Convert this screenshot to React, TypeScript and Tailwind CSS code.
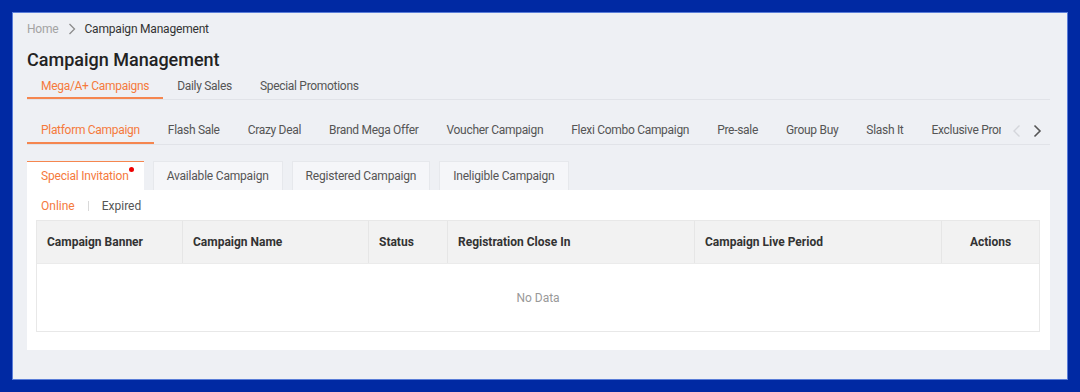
import React from "react";

const subTabs = [
  "Platform Campaign",
  "Flash Sale",
  "Crazy Deal",
  "Brand Mega Offer",
  "Voucher Campaign",
  "Flexi Combo Campaign",
  "Pre-sale",
  "Group Buy",
  "Slash It",
  "Exclusive Promotion",
];

const cardTabs = ["Special Invitation", "Available Campaign", "Registered Campaign", "Ineligible Campaign"];

export default function App() {
  return (
    <div
      className="w-[1080px] h-[392px] bg-[#0029a3] p-[12px]"
      style={{ fontFamily: "Roboto, 'Liberation Sans', sans-serif" }}
    >
      <div className="h-full border border-[#5a7dd8] bg-[#eef0f4] pl-[14px] pr-[17px] pt-[6px]">
        {/* breadcrumb */}
        <div className="flex items-center h-[20px] text-[12px] tracking-[-0.2px]">
          <span className="text-[#a3a3a3]">Home</span>
          <svg width="14" height="14" viewBox="0 0 14 14" className="mx-[6px]">
            <path d="M4.5 2 L9.5 7 L4.5 12" fill="none" stroke="#8c8c8c" strokeWidth="1.3" />
          </svg>
          <span className="text-[#333]">Campaign Management</span>
        </div>
        {/* title */}
        <div className="mt-[8px] h-[26px] leading-[26px] text-[18px] font-medium text-[#222]">Campaign Management</div>
        {/* top tabs */}
        <div className="flex border-b border-[#e1e3e8] h-[27px]">
          {["Mega/A+ Campaigns", "Daily Sales", "Special Promotions"].map((t, i) => (
            <div
              key={t}
              className={
                "px-[14px] h-[26px] pt-[2px] flex items-center text-[12px] tracking-[-0.3px] border-b-2 " +
                (i === 0 ? "text-[#f57a3c] border-[#f5864f]" : "text-[#555] border-transparent")
              }
            >
              {t}
            </div>
          ))}
        </div>
        {/* sub tabs */}
        <div className="mt-[15px] flex items-center border-b border-[#e1e3e8] h-[30px]">
          <div className="flex overflow-hidden w-[974px] h-[29px]">
            {subTabs.map((t, i) => (
              <div
                key={t}
                className={
                  "shrink-0 px-[14px] h-[29px] pt-[3px] flex items-center text-[12px] tracking-[-0.3px] border-b-2 whitespace-nowrap " +
                  (i === 0 ? "text-[#f57a3c] border-[#f5864f]" : "text-[#555] border-transparent")
                }
              >
                {t}
              </div>
            ))}
          </div>
          <div className="flex items-center h-[29px] pt-[2px] ml-[9px] gap-[6px]">
            <svg width="14" height="16" viewBox="0 0 14 16">
              <path d="M9.5 2.5 L4 8 L9.5 13.5" fill="none" stroke="#d4d6db" strokeWidth="1.4" />
            </svg>
            <svg width="14" height="16" viewBox="0 0 14 16">
              <path d="M4.5 2.5 L10 8 L4.5 13.5" fill="none" stroke="#555" strokeWidth="1.6" />
            </svg>
          </div>
        </div>
        {/* card tabs */}
        <div className="mt-[16px] flex gap-[9px] items-end">
          {cardTabs.map((t, i) => (
            <div
              key={t}
              className={
                "relative h-[29px] flex items-center text-[12px] tracking-[-0.2px] whitespace-nowrap " +
                (i === 0
                  ? "bg-white border-t border-[#f5864f] text-[#f57a3c] pl-[14px] pr-[15px]"
                  : "bg-[#f5f6f9] border border-b-0 border-[#e6e8ec] text-[#555] px-[13px]")
              }
            >
              {t}
              {i === 0 && <span className="absolute top-[5px] right-[10px] w-[5px] h-[5px] rounded-full bg-[#ee0000]" />}
            </div>
          ))}
        </div>
        {/* content */}
        <div className="bg-white h-[160px] pt-[6px]">
          <div className="flex items-center h-[20px] pl-[14px] text-[12px]">
            <span className="text-[#f57a3c]">Online</span>
            <span className="mx-[13px] w-px h-[10px] bg-[#d9d9d9]" />
            <span className="text-[#555]">Expired</span>
          </div>
          <div className="mt-[4px] ml-[9px] mr-[10px] border border-[#e8e8e8]">
            <div className="grid grid-cols-[146px_186px_79px_247px_247px_1fr] h-[42px] bg-[#f2f2f2] text-[12px] font-bold text-[#333]">
              {["Campaign Banner", "Campaign Name", "Status", "Registration Close In", "Campaign Live Period"].map((h) => (
                <div key={h} className="flex items-center px-[10px] border-r border-[#e6e6e6]">
                  {h}
                </div>
              ))}
              <div className="flex items-center justify-center">Actions</div>
            </div>
            <div className="h-[68px] border-t border-[#ebebeb] flex items-center justify-center text-[12px] text-[#999]">
              No Data
            </div>
          </div>
        </div>
      </div>
    </div>
  );
}
